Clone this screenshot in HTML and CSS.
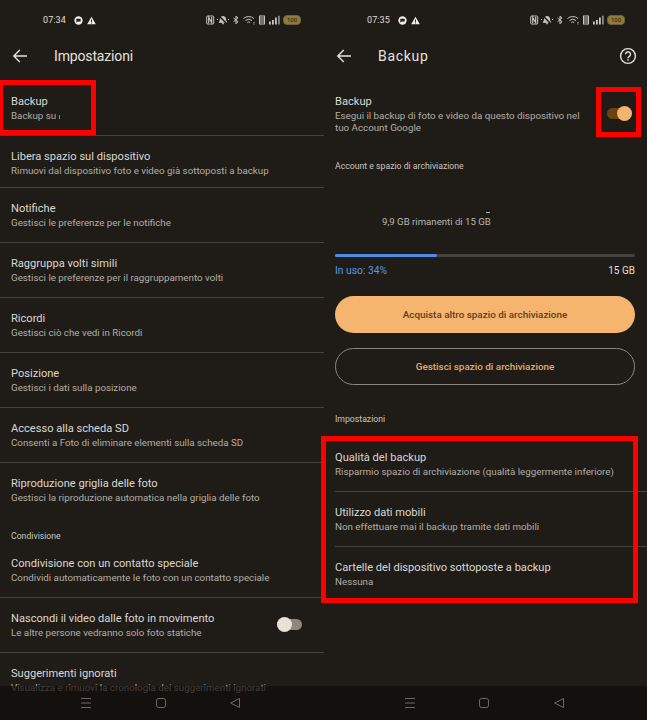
FILE: index.html
```html
<!DOCTYPE html>
<html lang="it">
<head>
<meta charset="utf-8">
<title>Impostazioni e Backup</title>
<link rel="stylesheet" href="styles.css">
</head>
<body>
<svg class="defs" width="0" height="0" aria-hidden="true">
  <defs>
    <symbol id="chat" viewBox="0 0 10 10"><circle cx="5" cy="5" r="4.600" fill="#eee"/><path d="M2.600 3h4.800v3.200H4L2.600 7.400Z" fill="#1f1c18"/></symbol>
    <symbol id="warn" viewBox="0 0 10 10"><path d="M5 .8 9.800 9.200H.2Z" fill="#eee"/><rect x="4.500" y="3.800" width="1" height="3" fill="#1f1c18"/><rect x="4.500" y="7.300" width="1" height="1" fill="#1f1c18"/></symbol>
    <symbol id="status" viewBox="0 0 77 10">
      <g fill="none" stroke="#c9c5bf" stroke-width="1">
        <rect x=".7" y="1" width="7" height="8" rx="1"/>
        <path d="M2.700 8V2.500L5.700 7.500V2" stroke-width="1.200"/>
        <path d="M17 1.500a2.600 2.600 0 0 1 2.600 2.600c0 2 .9 2.500 1.300 3.200h-7.800c.4-.7 1.300-1.200 1.300-3.200A2.600 2.600 0 0 1 17 1.500Z" fill="#c9c5bf"/>
        <path d="M13 .8 21 9" stroke="#1f1c18" stroke-width="1.500"/>
        <path d="M11 4.500h1M22 4.500h1M16 8.700h2"/>
        <path d="M27.500 3 32 6.800 30 8.800V1L32 3 27.500 6.800"/>
        <path d="M37.500 3.500a8 8 0 0 1 10.500 0M39.500 5.500a5 5 0 0 1 6.500 0M41.300 7.500a2.300 2.300 0 0 1 2.900 0"/>
        <path d="M47.500 7.500h1M47.500 9h1"/>
        <rect x="53.500" y="1" width="5" height="8"/>
        <path d="M54 3h4M54 5h4M54 7h4"/>
      </g>
      <g fill="#c9c5bf">
        <rect x="63" y="6.500" width="1.800" height="3"/><rect x="66" y="5" width="1.800" height="4.500"/><rect x="69" y="2.500" width="1.800" height="7"/><rect x="72" y=".8" width="1.800" height="8.700" fill="#8a8680"/>
      </g>
    </symbol>
    <symbol id="back" viewBox="0 0 16 16"><path d="M15 8H1.800M7.800 2 1.800 8 7.800 14" fill="none" stroke="currentColor" stroke-width="1.400"/></symbol>
    <symbol id="help" viewBox="0 0 18 18"><circle cx="9" cy="9" r="7.400" fill="none" stroke="currentColor" stroke-width="1.400"/><path d="M6.500 7.200a2.500 2.500 0 1 1 3.900 2.100c-.9.600-1.400 1-1.400 2" fill="none" stroke="currentColor" stroke-width="1.400"/><rect x="8.300" y="12.200" width="1.400" height="1.500" fill="currentColor"/></symbol>
    <symbol id="menu" viewBox="0 0 10 10"><path d="M0 .5h10M0 5h10M0 9.500h10" fill="none" stroke="currentColor"/></symbol>
    <symbol id="home" viewBox="0 0 10 10"><rect x=".5" y=".5" width="9" height="9" rx="2" fill="none" stroke="currentColor"/></symbol>
    <symbol id="tri" viewBox="0 0 10 10"><path d="M9.500.5V9.500L.7 5Z" fill="none" stroke="currentColor"/></symbol>
  </defs>
</svg>

<div class="screens">
  <section class="screen">
    <div class="statusbar">
      <span class="clock">07:34</span>
      <svg class="st-ic"><use href="#chat"/></svg>
      <svg class="st-ic warnic"><use href="#warn"/></svg>
      <span class="spring"></span>
      <svg class="st-right"><use href="#status"/></svg>
      <span class="batt">100</span>
    </div>
    <header class="appbar">
      <svg class="backic"><use href="#back"/></svg>
      <h1 class="h-set">Impostazioni</h1>
    </header>
    <ul class="list">
      <li class="row row-first"><div class="t">Backup</div><div class="s">Backup su <span class="clip"></span></div></li>
      <li class="row row-short"><div class="t">Libera spazio sul dispositivo</div><div class="s">Rimuovi dal dispositivo foto e video già sottoposti a backup</div></li>
      <li class="row"><div class="t">Notifiche</div><div class="s">Gestisci le preferenze per le notifiche</div></li>
      <li class="row"><div class="t">Raggruppa volti simili</div><div class="s">Gestisci le preferenze per il raggruppamento volti</div></li>
      <li class="row"><div class="t">Ricordi</div><div class="s">Gestisci ciò che vedi in Ricordi</div></li>
      <li class="row"><div class="t">Posizione</div><div class="s">Gestisci i dati sulla posizione</div></li>
      <li class="row"><div class="t">Accesso alla scheda SD</div><div class="s">Consenti a Foto di eliminare elementi sulla scheda SD</div></li>
      <li class="row row-plain"><div class="t">Riproduzione griglia delle foto</div><div class="s">Gestisci la riproduzione automatica nella griglia delle foto</div></li>
    </ul>
    <div class="label label-share">Condivisione</div>
    <ul class="list">
      <li class="row"><div class="t">Condivisione con un contatto speciale</div><div class="s">Condividi automaticamente le foto con un contatto speciale</div></li>
      <li class="row row-toggle">
        <div><div class="t">Nascondi il video dalle foto in movimento</div><div class="s">Le altre persone vedranno solo foto statiche</div></div>
        <span class="switch switch-off"><span class="knob"></span></span>
      </li>
      <li class="row row-plain"><div class="t">Suggerimenti ignorati</div><div class="s">Visualizza e rimuovi la cronologia dei suggerimenti ignorati</div></li>
    </ul>
    <nav class="navbar">
      <svg><use href="#menu"/></svg><svg><use href="#home"/></svg><svg><use href="#tri"/></svg>
    </nav>
    <div class="mark mark-left"></div>
  </section>

  <section class="screen screen-right">
    <div class="statusbar">
      <span class="clock">07:35</span>
      <svg class="st-ic"><use href="#chat"/></svg>
      <svg class="st-ic warnic"><use href="#warn"/></svg>
      <span class="spring"></span>
      <svg class="st-right"><use href="#status"/></svg>
      <span class="batt">100</span>
    </div>
    <header class="appbar">
      <svg class="backic"><use href="#back"/></svg>
      <h1 class="h-backup">Backup</h1>
      <svg class="helpic"><use href="#help"/></svg>
    </header>
    <div class="row-backup">
      <div class="backup-text"><div class="t">Backup</div><div class="s s-wrap">Esegui il backup di foto e video da questo dispositivo nel tuo Account Google</div></div>
      <span class="switch switch-on"><span class="knob"></span></span>
    </div>
    <div class="label label-account">Account e spazio di archiviazione</div>
    <div class="remaining"><span class="dash"></span>9,9 GB rimanenti di 15 GB</div>
    <div class="bar"><div class="fill" style="width:34%"></div></div>
    <div class="usage"><span class="used">In uso: 34%</span><span class="total">15 GB</span></div>
    <button class="btn btn-fill">Acquista altro spazio di archiviazione</button>
    <button class="btn btn-line">Gestisci spazio di archiviazione</button>
    <div class="label label-set">Impostazioni</div>
    <ul class="list list-r">
      <li class="row row-r"><div class="t">Qualità del backup</div><div class="s">Risparmio spazio di archiviazione (qualità leggermente inferiore)</div></li>
      <li class="row row-r"><div class="t">Utilizzo dati mobili</div><div class="s">Non effettuare mai il backup tramite dati mobili</div></li>
      <li class="row row-r row-plain"><div class="t">Cartelle del dispositivo sottoposte a backup</div><div class="s">Nessuna</div></li>
    </ul>
    <nav class="navbar">
      <svg><use href="#menu"/></svg><svg><use href="#home"/></svg><svg><use href="#tri"/></svg>
    </nav>
    <div class="mark mark-switch"></div>
    <div class="mark mark-list"></div>
  </section>
</div>
</body>
</html>
```

FILE: styles.css
```css
* { box-sizing: border-box; }
html, body { margin: 0; padding: 0; background: #1f1c18; }
body { font-family: Roboto, "Liberation Sans", sans-serif; width: 647px; height: 720px; overflow: hidden; }
.defs { position: absolute; }
.screens { display: flex; width: 647px; height: 720px; }
.screen { position: relative; width: 324px; height: 720px; background: #1f1c18; color: #e6e1da; flex: none; }
.screen-right { width: 323px; }
ul.list { list-style: none; margin: 0; padding: 0; }

.statusbar { display: flex; align-items: center; height: 12px; margin-top: 14px; padding: 0 23px 0 43px; font-size: 9px; color: #e0ddd8; }
.screen-right .statusbar { padding-right: 22px; }
.clock { width: 24px; letter-spacing: .1px; }
.st-ic { width: 9px; height: 9px; margin-left: 7px; }
.warnic { margin-left: 4px; }
.spring { flex: 1; }
.st-right { width: 77px; height: 10px; }
.batt { width: 18px; height: 10px; border: 1px solid #6b6040; border-radius: 4px; background: #8f7b3a; color: #1f1c18; font-size: 6px; line-height: 8px; text-align: center; }

.appbar { display: flex; align-items: center; height: 30px; margin-top: 15px; padding-left: 12px; color: #e6e1da; }
.appbar h1 { margin: 0 0 0 26px; font-size: 14px; font-weight: 400; }
.h-set { letter-spacing: -.15px; }
.h-backup { letter-spacing: .7px; }
.backic { width: 16px; height: 16px; }
.helpic { width: 18px; height: 18px; margin-left: auto; margin-right: 10px; }

.row { padding: 14px 0 0 11px; height: 55px; border-bottom: 1px solid #47423b; }
.row-plain { border-bottom: 0; }
.row-first { margin-top: 10px; }
.row-short { height: 52px; }
.t { font-size: 11.100px; line-height: 14px; color: #dcd8d1; }
.s { font-size: 9.770px; line-height: 14px; color: #b3aea6; white-space: nowrap; }
.clip { display: inline-block; width: 1px; height: 4px; background: #8a857d; }
.label { font-size: 8.700px; color: #c9c5bf; padding-left: 11px; line-height: 12px; }
.label-share { margin: 12px 0 1px; }
.row-toggle { display: flex; justify-content: space-between; align-items: flex-start; padding-right: 22px; }
.row-toggle .switch { margin-top: 7px; }

.switch { display: inline-block; position: relative; width: 25px; height: 11px; border-radius: 6px; flex: none; }
.knob { position: absolute; top: -2px; width: 15px; height: 15px; border-radius: 50%; }
.switch-off { background: #8f877d; }
.switch-off .knob { left: 0; background: #e8e1d8; }
.switch-on { background: #6b4310; }
.switch-on .knob { right: 0; background: #f3b46e; }

.row-backup { display: flex; padding: 24px 15px 0 11px; justify-content: space-between; align-items: flex-start; }
.backup-text { width: 252px; }
.s-wrap { white-space: normal; line-height: 12.500px; margin-top: .5px; }
.row-backup .switch { margin-top: 13px; }

.label-account { margin-top: 25px; }
.remaining { position: relative; margin: 43px 0 0 58px; font-size: 9.650px; line-height: 14px; color: #b9b4ac; }
.dash { position: absolute; left: 104px; top: -3px; width: 4px; height: 1px; background: #bbb; }
.bar { height: 3px; margin: 25px 12px 0 11px; border-radius: 2px; background: #45423e; }
.fill { height: 3px; border-radius: 2px; background: #4d8ce8; }
.usage { display: flex; justify-content: space-between; margin: 7px 12px 0 11px; line-height: 14px; }
.used { color: #5b94e6; font-size: 10.300px; }
.total { color: #e3dfd8; font-size: 10px; }

.btn { display: block; width: 300px; margin-left: 11px; border-radius: 19px; height: 37px; font-family: inherit; font-size: 9.900px; font-weight: 500; padding: 0; }
.btn-fill { margin-top: 18px; background: #f5b56f; border: 0; color: #5a3f1f; }
.btn-line { margin-top: 15px; background: transparent; border: 1px solid #8a857d; color: #e2ab68; }

.label-set { margin-top: 28px; }
.list-r { margin-top: 12px !important; }
.row-r { margin-left: 11px; padding-left: 0; }

.navbar { position: absolute; left: 0; right: 0; bottom: 0; height: 34px; display: flex; justify-content: center; gap: 64.500px; align-items: center; padding-right: 3px; background: rgba(15, 12, 10, .7); color: #6d6a65; }
.navbar svg { width: 10px; height: 10px; }

.mark { position: absolute; border: 5.500px solid #f00; }
.mark-left { left: -2px; top: 80px; width: 98px; height: 55px; }
.mark-switch { left: 272px; top: 87px; width: 45px; height: 50px; }
.mark-list { left: -3px; top: 436px; width: 317px; height: 167px; }
```
